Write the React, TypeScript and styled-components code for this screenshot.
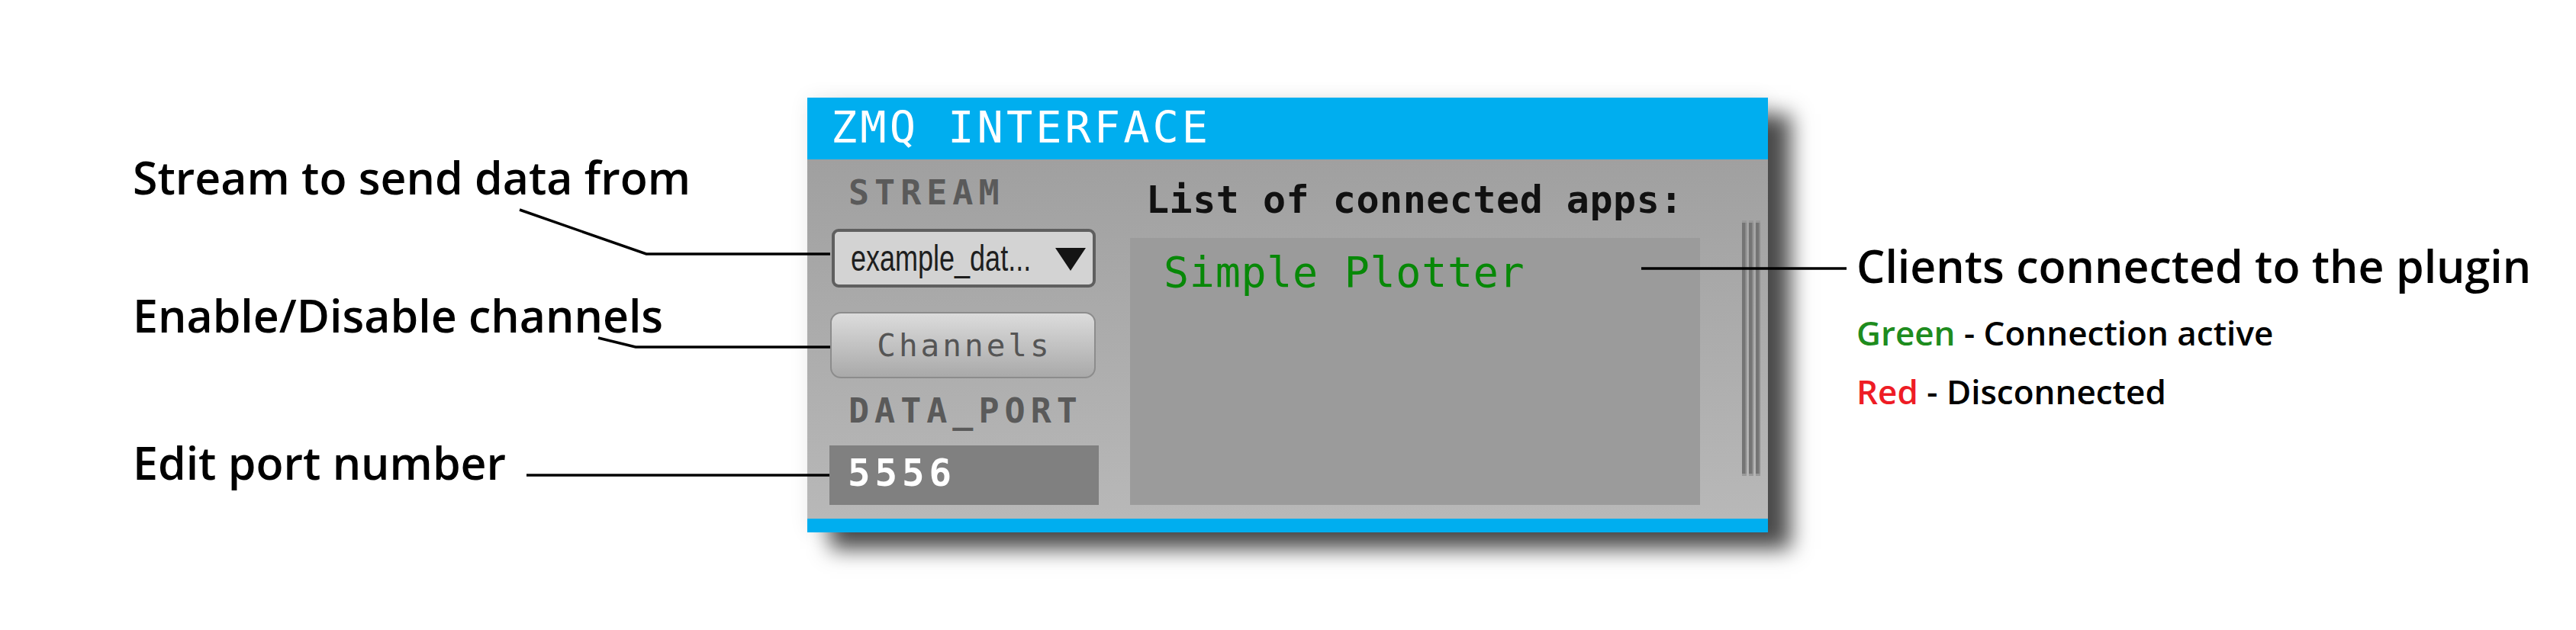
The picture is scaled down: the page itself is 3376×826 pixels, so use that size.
import React from "react";
import styled, { createGlobalStyle } from "styled-components";

const Global = createGlobalStyle`
  html, body { margin: 0; padding: 0; background: #ffffff; }
  #root { width: 3376px; height: 826px; }
`;

const Stage = styled.div`
  position: relative;
  width: 3376px;
  height: 826px;
  display: flex;
  align-items: flex-start;
  background: #ffffff;
  overflow: hidden;
`;

const LeftNotes = styled.div`
  box-sizing: border-box;
  width: 1058px;
  flex: none;
  padding: 199px 0 0 174px;
  display: flex;
  flex-direction: column;
`;

const RightNotes = styled.div`
  box-sizing: border-box;
  flex: none;
  padding: 315px 0 0 116px;
  display: flex;
  flex-direction: column;
`;

const Note = styled.div<{ $gap: number; $small?: boolean }>`
  margin-top: ${(p) => p.$gap}px;
  font-family: "Open Sans", "Noto Sans", sans-serif;
  font-weight: 600;
  font-size: ${(p) => (p.$small ? 44 : 59)}px;
  line-height: ${(p) => (p.$small ? 52 : 67)}px;
  color: #000000;
  white-space: nowrap;
`;

const Tint = styled.span<{ $color: string }>`
  color: ${(p) => p.$color};
`;

const Panel = styled.div`
  flex: none;
  margin-top: 128px;
  width: 1259px;
  display: flex;
  flex-direction: column;
  box-shadow: 30px 22px 26px rgba(0, 0, 0, 0.7), 0 0 24px rgba(0, 0, 0, 0.08);
`;

const Header = styled.div`
  box-sizing: border-box;
  height: 81px;
  background: #00aeef;
  display: flex;
  align-items: center;
  padding: 0 0 4px 31px;
  font-family: "DejaVu Sans Mono", monospace;
  font-size: 57px;
  letter-spacing: 4px;
  color: #ffffff;
  white-space: pre;
`;

const Body = styled.div`
  box-sizing: border-box;
  height: 471px;
  display: flex;
  align-items: flex-start;
  padding: 0 10px 0 29px;
  background: linear-gradient(#a0a0a0, #b8b8b8);
`;

const LeftCol = styled.div`
  width: 353px;
  flex: none;
  display: flex;
  flex-direction: column;
  padding-top: 14px;
`;

const FieldLabel = styled.div<{ $gap: number }>`
  margin-top: ${(p) => p.$gap}px;
  height: 60px;
  line-height: 60px;
  padding-left: 25px;
  font-family: "DejaVu Sans Mono", monospace;
  font-weight: 700;
  font-size: 45px;
  letter-spacing: 7px;
  color: #5a5a5a;
  white-space: nowrap;
`;

const Dropdown = styled.div`
  box-sizing: border-box;
  margin: 17px 4px 0 3px;
  height: 77px;
  border: 4px solid #5f5f5f;
  border-radius: 9px;
  background: #d3d3d3;
  display: flex;
  align-items: center;
  padding: 0 9px 0 21px;
`;

const DropLabel = styled.div`
  width: 240px;
  flex: none;
  white-space: nowrap;
`;

const DropText = styled.span`
  display: inline-block;
  font-family: "Liberation Sans", Arial, sans-serif;
  font-size: 48px;
  line-height: 60px;
  color: #1e1e1e;
  transform: scaleX(0.75);
  transform-origin: left center;
`;

const Caret = styled.div`
  margin-left: auto;
  margin-top: 3px;
  width: 0;
  height: 0;
  border-left: 20px solid transparent;
  border-right: 20px solid transparent;
  border-top: 30px solid #141414;
`;

const ChannelsButton = styled.div`
  box-sizing: border-box;
  margin: 32px 4px 0 1px;
  height: 87px;
  border: 2px solid #8c8c8c;
  border-radius: 14px;
  background: linear-gradient(#dcdcdc, #a9a9a9);
  display: flex;
  align-items: center;
  justify-content: center;
  padding-left: 4px;
  font-family: "DejaVu Sans Mono", monospace;
  font-size: 41px;
  letter-spacing: 4px;
  color: #555555;
`;

const PortInput = styled.div`
  box-sizing: border-box;
  margin-top: 15px;
  height: 78px;
  background: #808080;
  display: flex;
  align-items: center;
  padding: 0 0 6px 24px;
  font-family: "DejaVu Sans Mono", monospace;
  font-weight: 700;
  font-size: 49px;
  letter-spacing: 6px;
  color: #ffffff;
`;

const RightCol = styled.div`
  margin-left: 41px;
  width: 747px;
  flex: none;
  display: flex;
  flex-direction: column;
  padding-top: 23px;
`;

const ListTitle = styled.div`
  height: 60px;
  line-height: 60px;
  padding-left: 21px;
  font-family: "DejaVu Sans Mono", monospace;
  font-weight: 700;
  font-size: 50px;
  letter-spacing: 0.5px;
  color: #111111;
  white-space: pre;
`;

const ListBox = styled.div`
  box-sizing: border-box;
  margin-top: 20px;
  height: 350px;
  background: #9b9b9b;
  padding: 15px 0 0 44px;
`;

const ClientItem = styled.div<{ $active: boolean }>`
  line-height: 60px;
  font-family: "DejaVu Sans Mono", monospace;
  font-size: 55px;
  letter-spacing: 0.7px;
  color: ${(p) => (p.$active ? "#078807" : "#d01010")};
  white-space: pre;
`;

const Scrollbar = styled.div`
  margin: 80px 0 0 55px;
  width: 24px;
  height: 335px;
  flex: none;
  display: flex;
  gap: 3px;
`;

const ScrollLine = styled.div`
  width: 6px;
  background: linear-gradient(to right, #747474 0 70%, #8a8a8a 70%);
  border-top: 3px solid #999999;
  border-bottom: 3px solid #999999;
`;

const BottomBar = styled.div`
  height: 18px;
  background: #00aeef;
`;

const Connectors = styled.svg`
  position: absolute;
  left: 0;
  top: 0;
  width: 3376px;
  height: 826px;
  pointer-events: none;
  z-index: 2;
`;

export default function App() {
  return (
    <>
      <Global />
      <Stage>
        <LeftNotes>
          <Note $gap={0}>Stream to send data from</Note>
          <Note $gap={114}>Enable/Disable channels</Note>
          <Note $gap={126}>Edit port number</Note>
        </LeftNotes>

        <Panel>
          <Header>ZMQ INTERFACE</Header>
          <Body>
            <LeftCol>
              <FieldLabel $gap={0}>STREAM</FieldLabel>
              <Dropdown>
                <DropLabel>
                  <DropText>example_dat...</DropText>
                </DropLabel>
                <Caret />
              </Dropdown>
              <ChannelsButton>Channels</ChannelsButton>
              <FieldLabel $gap={13}>DATA_PORT</FieldLabel>
              <PortInput>5556</PortInput>
            </LeftCol>
            <RightCol>
              <ListTitle>List of connected apps:</ListTitle>
              <ListBox>
                <ClientItem $active>Simple Plotter</ClientItem>
              </ListBox>
            </RightCol>
            <Scrollbar>
              <ScrollLine />
              <ScrollLine />
              <ScrollLine />
            </Scrollbar>
          </Body>
          <BottomBar />
        </Panel>

        <RightNotes>
          <Note $gap={0}>Clients connected to the plugin</Note>
          <Note $gap={28} $small>
            <Tint $color="#1e8c1e">Green</Tint> - Connection active
          </Note>
          <Note $gap={25} $small>
            <Tint $color="#ee1c25">Red</Tint> - Disconnected
          </Note>
        </RightNotes>

        <Connectors viewBox="0 0 3376 826">
          <g fill="none" stroke="#000000" strokeWidth={3.5}>
            <polyline points="681,275 847,333 1088,333" />
            <polyline points="784,443 833,455 1088,455" />
            <polyline points="690,623 1087,623" />
            <polyline points="2151,352 2420,352" />
          </g>
        </Connectors>
      </Stage>
    </>
  );
}
